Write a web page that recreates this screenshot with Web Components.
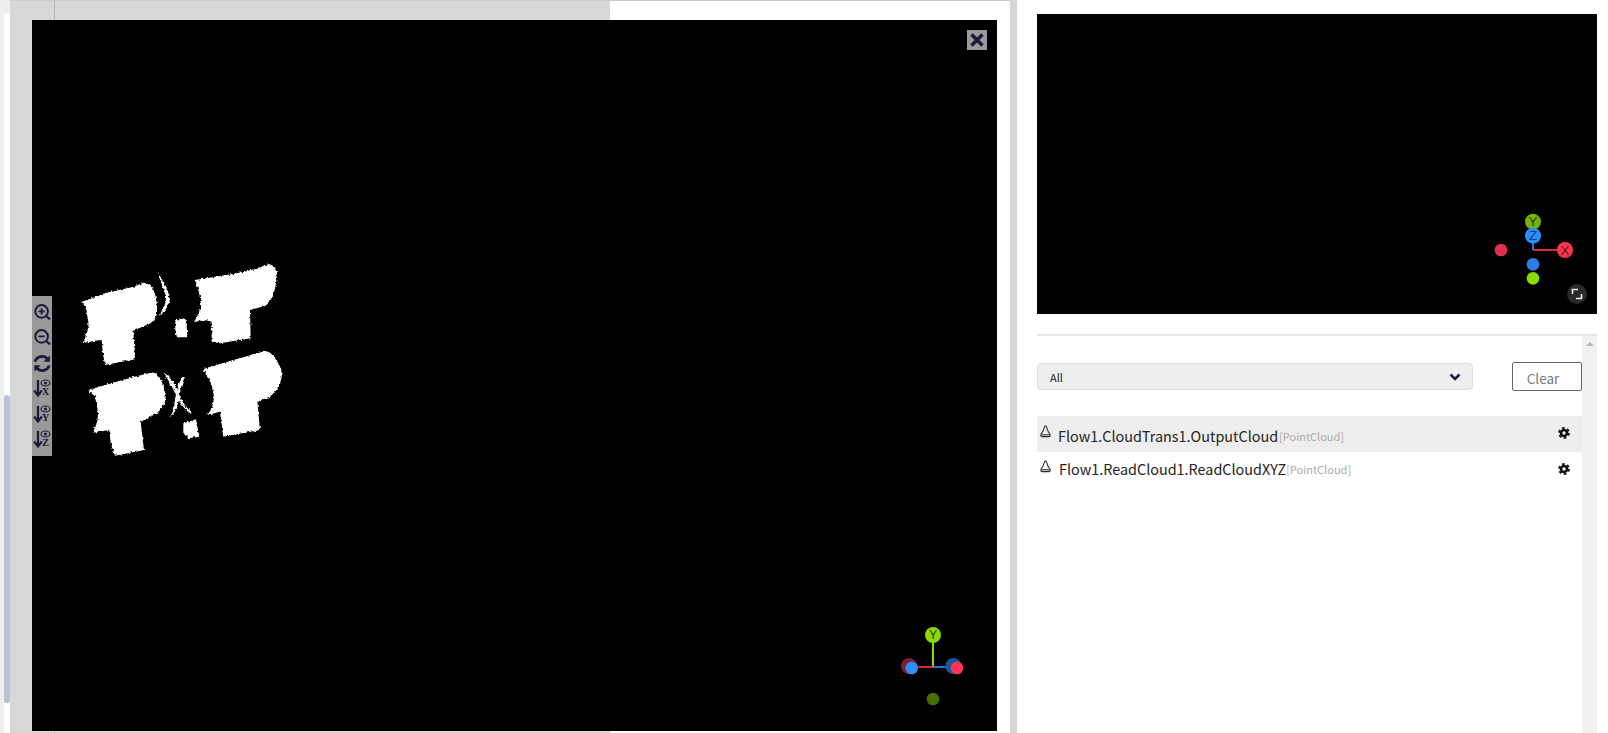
<!DOCTYPE html>
<html>
<head>
<meta charset="utf-8">
<title>Cloud viewer</title>
<style>
    html, body { margin: 0; height: 733px; overflow: hidden; background: #fff; }
    body { font-family: "Noto Sans CJK SC", "Noto Sans", sans-serif; }
</style>
</head>
<body>
<app-shell>
    <page-track slot="track"></page-track>
    <cloud-viewer slot="main"></cloud-viewer>
    <side-panel slot="side">
        <view-preview slot="preview"></view-preview>
        <log-row slot="rows" active name="Flow1.CloudTrans1.OutputCloud" kind="[PointCloud]"></log-row>
        <log-row slot="rows" name="Flow1.ReadCloud1.ReadCloudXYZ" kind="[PointCloud]"></log-row>
    </side-panel>
</app-shell>

<script>
class AppShell extends HTMLElement {
    constructor() {
        super();
        this.attachShadow({ mode: 'open' });
        this.shadowRoot.innerHTML = `
            <style>
                :host { display: flex; width: 1608px; height: 733px; }
                .main {
                    width: 1000px;
                    height: 733px;
                    box-sizing: border-box;
                    padding: 20px 13px 2px 22px;
                    border-top: 1px solid #c9c9c9;
                    padding-top: 19px;
                    background:
                        linear-gradient(to right, transparent 44px, #b5b5b5 44px, #b5b5b5 45px, transparent 45px),
                        linear-gradient(to right, #d7d7d7 600px, #fff 600px);
                }
                .gutter { width: 7px; background: #d7d7d7; }
                .side { flex: 1; min-width: 0; }
            </style>
            <slot name="track"></slot>
            <div class="main"><slot name="main"></slot></div>
            <div class="gutter"></div>
            <div class="side"><slot name="side"></slot></div>
        `;
    }
}

class PageTrack extends HTMLElement {
    constructor() {
        super();
        this.attachShadow({ mode: 'open' });
        this.shadowRoot.innerHTML = `
            <style>
                :host {
                    display: flex;
                    flex-direction: column;
                    width: 10px;
                    height: 733px;
                    box-sizing: border-box;
                    border-left: 4px solid #eee;
                }
                .top { height: 14px; background: #eee; }
                .gap { height: 381px; background: #fff; }
                .thumb { height: 308px; background: #b9c3d5; border-radius: 3px 3px 2px 2px; }
            </style>
            <div class="top"></div>
            <div class="gap"></div>
            <div class="thumb"></div>
        `;
    }
}

class ViewTools extends HTMLElement {
    constructor() {
        super();
        this.attachShadow({ mode: 'open' });
        const arrow = '<path d="M6 5V20M2.2 15.5 6 20.5 9.8 15.5" fill="none" stroke="#1a1a3c" stroke-width="2.2"/>';
        const eye = '<ellipse cx="13.5" cy="8" rx="4.4" ry="3" fill="none" stroke="#1a1a3c" stroke-width="1.2"/><circle cx="13.5" cy="8" r="1.5" fill="#1a1a3c"/>';
        const axis = (l) => `<svg viewBox="0 0 20 25.4">${arrow}${eye}<text x="13.5" y="20.5" text-anchor="middle" font-family="Liberation Serif" font-weight="700" font-size="10.5" fill="#1a1a3c">${l}</text></svg>`;
        const lens = (plus) => `<svg viewBox="0 0 20 25.4"><circle cx="9.6" cy="12.4" r="6.3" fill="none" stroke="#1a1a3c" stroke-width="2"/><path d="M14.2 17 18 20.4" stroke="#1a1a3c" stroke-width="2.2"/><path d="${plus ? 'M6.6 12.4H12.6M9.6 9.4V15.4' : 'M6.6 12.4H12.6'}" stroke="#1a1a3c" stroke-width="1.8"/></svg>`;
        this.shadowRoot.innerHTML = `
            <style>
                :host {
                    display: grid;
                    grid-auto-rows: 25.4px;
                    width: 20px;
                    height: 160px;
                    box-sizing: border-box;
                    padding-top: 3px;
                    background: #999;
                }
                svg { display: block; width: 20px; height: 25.4px; }
            </style>
            ${lens(true)}
            ${lens(false)}
            <svg viewBox="0 0 20 25.4">
                <g transform="translate(0 .8)">
                    <path d="M3 10.8A7.3 7.3 0 0 1 15.6 8.2" fill="none" stroke="#1a1a3c" stroke-width="2.8"/>
                    <path d="M17.8 4.8V11H11.6Z" fill="#1a1a3c"/>
                    <path d="M17.2 14.6A7.3 7.3 0 0 1 4.6 17.2" fill="none" stroke="#1a1a3c" stroke-width="2.8"/>
                    <path d="M2.4 20.6V14.4H8.6Z" fill="#1a1a3c"/>
                </g>
            </svg>
            ${axis('X')}
            ${axis('Y')}
            ${axis('Z')}
        `;
    }
}

class CloudViewer extends HTMLElement {
    constructor() {
        super();
        this.attachShadow({ mode: 'open' });
        this.shadowRoot.innerHTML = `
            <style>
                :host {
                    display: block;
                    position: relative;
                    height: 711px;
                    background: #000;
                    overflow: hidden;
                }
                .cloud { position: absolute; left: 0; top: 0; width: 965px; height: 711px; }
                view-tools { position: absolute; left: 0; top: 276px; }
                .close {
                    position: absolute;
                    top: 10px;
                    right: 10px;
                    width: 20px;
                    height: 20px;
                    background: #999;
                }
                .close svg { display: block; }
                .gizmo { position: absolute; left: 848px; top: 590px; width: 120px; height: 121px; }
            </style>
            <svg class="cloud" viewBox="32 20 965 711">
                <defs>
                    <filter id="rough" filterUnits="userSpaceOnUse" x="32" y="20" width="400" height="500" color-interpolation-filters="sRGB">
                        <feTurbulence type="fractalNoise" baseFrequency="0.45" numOctaves="1" seed="4"/>
                        <feDisplacementMap in="SourceGraphic" scale="4" xChannelSelector="R" yChannelSelector="G"/>
                    </filter>
                </defs>
                <g filter="url(#rough)">
                    <g fill="#fff" transform="translate(20 280) scale(.33333)">
                        <path d="M186 65 260 38 340 20 370 8Q392 10 400 30 415 60 410 105 400 130 375 138L340 152 345 238 255 255 248 215 245 180 225 182 188 190Q208 150 205 125L198 85Z"/>
                        <path d="M410 -25Q445 20 450 60 440 95 415 108 440 75 438 50 430 20 410 -25Z"/>
                        <path d="M525 0 640 -18 708 -33 747 -48Q772 -40 771 -15 765 60 735 78L690 90 692 175 600 190 575 185 575 125 555 120 522 125Q548 90 540 50 535 25 525 0Z"/>
                        <path d="M468 120 495 115 500 130 502 172 470 172 465 140Z"/>
                        <path d="M205 330 325 295 400 277Q418 285 425 305 442 340 435 365 425 395 395 408L362 425 372 510 285 527 272 490 268 450 218 458Q240 420 232 385L225 350Z"/>
                        <path d="M430 280 445 285Q470 315 480 350 495 380 518 400L510 402Q480 375 465 340 450 305 430 280Z"/>
                        <path d="M490 285 495 290Q480 320 475 365 470 395 448 413 462 395 465 360 472 315 490 285Z"/>
                        <path d="M490 430 528 418 537 470 505 475 490 460Z"/>
                        <path d="M548 268 640 240 735 213Q755 215 765 235 788 265 785 290 778 335 745 352L712 365 720 450 610 470 600 395 562 405Q590 370 578 330 570 295 548 268Z"/>
                    </g>
                </g>
            </svg>
            <view-tools></view-tools>
            <div class="close">
                <svg width="20" height="20" viewBox="0 0 20 20">
                    <path d="M4.5 4.5 15.5 15.5M15.5 4.5 4.5 15.5" stroke="#1a1a3c" stroke-width="3.4"/>
                </svg>
            </div>
            <svg class="gizmo" viewBox="0 0 360 363">
                <path d="M159 75V170" stroke="#8adb00" stroke-width="6"/>
                <path d="M115 171H159" stroke="#ff3653" stroke-width="5"/>
                <path d="M159 171H212" stroke="#2c8fff" stroke-width="5"/>
                <circle cx="87" cy="168" r="24" fill="#7d1f33"/>
                <circle cx="220" cy="168" r="24" fill="#1a5596"/>
                <circle cx="159" cy="267" r="19" fill="#476f00"/>
                <circle cx="95" cy="174" r="19" fill="#2c8fff"/>
                <circle cx="231" cy="174" r="19" fill="#ff3653"/>
                <circle cx="159" cy="75" r="24" fill="#8adb00"/>
                <text x="159" y="88" text-anchor="middle" font-family="Liberation Sans" font-size="37" fill="#2e3a10">Y</text>
            </svg>
        `;
    }
}

class ViewPreview extends HTMLElement {
    constructor() {
        super();
        this.attachShadow({ mode: 'open' });
        this.shadowRoot.innerHTML = `
            <style>
                :host { display: block; position: relative; height: 300px; background: #000; }
                .gizmo { position: absolute; left: 433px; top: 186px; width: 138px; height: 114px; }
                .expand {
                    position: absolute;
                    right: 0;
                    bottom: 0;
                    margin: 0 10px 10px 0;
                    width: 20px;
                    height: 20px;
                    border-radius: 50%;
                    background: #2a2a2a;
                }
                .expand svg { display: block; }
            </style>
            <svg class="gizmo" viewBox="0 0 414 342">
                <path d="M189 150H265" stroke="#ff3653" stroke-width="5"/>
                <path d="M189 125V150" stroke="#2c8fff" stroke-width="5"/>
                <circle cx="93" cy="150" r="19" fill="#e0304e"/>
                <circle cx="189" cy="193" r="19" fill="#2880e6"/>
                <circle cx="189" cy="235" r="19" fill="#8adb00"/>
                <circle cx="189" cy="65" r="24" fill="#73b400"/>
                <text x="189" y="79" text-anchor="middle" font-family="Liberation Sans" font-size="40" fill="#2e3a10">Y</text>
                <circle cx="189" cy="107" r="24" fill="#2c8fff"/>
                <text x="189" y="121" text-anchor="middle" font-family="Liberation Sans" font-size="40" fill="#174070">Z</text>
                <circle cx="285" cy="150" r="24" fill="#ff3653"/>
                <text x="285" y="164" text-anchor="middle" font-family="Liberation Sans" font-size="40" fill="#6a1020">X</text>
            </svg>
            <div class="expand">
                <svg width="20" height="20" viewBox="0 0 20 20" fill="none" stroke="#eee" stroke-width="1.6">
                    <path d="M5.5 10V5.5H11"/>
                    <path d="M14.5 10V14.5H9"/>
                </svg>
            </div>
        `;
    }
}

class LogRow extends HTMLElement {
    constructor() {
        super();
        this.attachShadow({ mode: 'open' });
        this.shadowRoot.innerHTML = `
            <style>
                :host {
                    display: flex;
                    align-items: center;
                    height: 34px;
                    padding-right: 12px;
                    color: #222;
                }
                :host([active]) { height: 36px; background: #eee; }
                .bell { width: 11px; height: 13px; margin: 0 7px 6px 3px; flex: none; }
                .name { font-size: 14.4px; line-height: 20px; margin-left: 1px; }
                :host([active]) .name { margin-top: 3px; margin-left: 0; }
                .kind { font-size: 11px; line-height: 20px; color: #aaa; }
                :host([active]) .kind { margin-top: 3px; margin-left: 1px; }
                .gear { margin-left: auto; width: 12px; height: 12px; flex: none; }
                :host([active]) .gear { margin-bottom: 2px; }
            </style>
            <svg class="bell" viewBox="0 0 11 13" fill="none" stroke="#2a2a2a" stroke-width="1.1">
                <path d="M5.5 .8C4.4 1.1 4.1 2.6 3.8 4 3.4 6 2.2 7.2 1.3 8.8 .7 10 .7 11.6 1.8 11.6H9.2C10.3 11.6 10.3 10 9.7 8.8 8.8 7.2 7.6 6 7.2 4 6.9 2.6 6.6 1.1 5.5 .8Z"/>
                <path d="M1.4 9.8H9.6"/>
            </svg>
            <span class="name"></span><span class="kind"></span>
            <svg class="gear" viewBox="0 0 12 12" fill="none" stroke="#111">
                <circle cx="6" cy="6" r="3" stroke-width="2.6"/>
                <circle cx="6" cy="6" r="4.9" stroke-width="2" stroke-dasharray="2.57 2.57"/>
            </svg>
        `;
    }

    connectedCallback() {
        this.shadowRoot.querySelector('.name').textContent = this.getAttribute('name') || '';
        this.shadowRoot.querySelector('.kind').textContent = this.getAttribute('kind') || '';
    }
}

class SidePanel extends HTMLElement {
    constructor() {
        super();
        this.attachShadow({ mode: 'open' });
        this.shadowRoot.innerHTML = `
            <style>
                :host {
                    display: block;
                    box-sizing: border-box;
                    height: 733px;
                    padding: 14px 11px 0 20px;
                    background: #fff;
                }
                .rule { height: 2px; background: #e6e6e6; margin-top: 20px; }
                .log { display: flex; height: 397px; }
                .body { flex: 1; min-width: 0; }
                .bar { width: 15px; background: #f1f1f1; display: flex; justify-content: center; padding-top: 6px; box-sizing: border-box; }
                .bar i { display: block; width: 0; height: 0; border: 4px solid transparent; border-top: 0; border-bottom: 4px solid #b5b5b5; }
                .tools {
                    display: flex;
                    justify-content: space-between;
                    align-items: center;
                    margin: 26px 0 25px;
                }
                .select {
                    display: flex;
                    align-items: center;
                    justify-content: space-between;
                    box-sizing: border-box;
                    width: 436px;
                    height: 27px;
                    padding: 0 11px 0 12px;
                    background: #eee;
                    border: 1px solid #dcdce2;
                    border-radius: 4px;
                    font-size: 11px;
                    color: #222;
                }
                button {
                    box-sizing: border-box;
                    width: 70px;
                    height: 29px;
                    padding: 2px 8px 0 0;
                    background: #fff;
                    border: 1px solid #666;
                    border-radius: 2px;
                    font: 13.5px "Noto Sans CJK SC", "Noto Sans", sans-serif;
                    color: #777;
                }
            </style>
            <slot name="preview"></slot>
            <div class="rule"></div>
            <div class="log">
                <div class="body">
                    <div class="tools">
                        <div class="select">
                            <span>All</span>
                            <svg width="12" height="8" viewBox="0 0 12 8" fill="none" stroke="#1a1a3c" stroke-width="2.6">
                                <path d="M1.5 1.5 6 6 10.5 1.5"/>
                            </svg>
                        </div>
                        <button>Clear</button>
                    </div>
                    <slot name="rows"></slot>
                </div>
                <div class="bar"><i></i></div>
            </div>
        `;
    }
}

customElements.define('app-shell', AppShell);
customElements.define('page-track', PageTrack);
customElements.define('view-tools', ViewTools);
customElements.define('cloud-viewer', CloudViewer);
customElements.define('view-preview', ViewPreview);
customElements.define('log-row', LogRow);
customElements.define('side-panel', SidePanel);
</script>
</body>
</html>
